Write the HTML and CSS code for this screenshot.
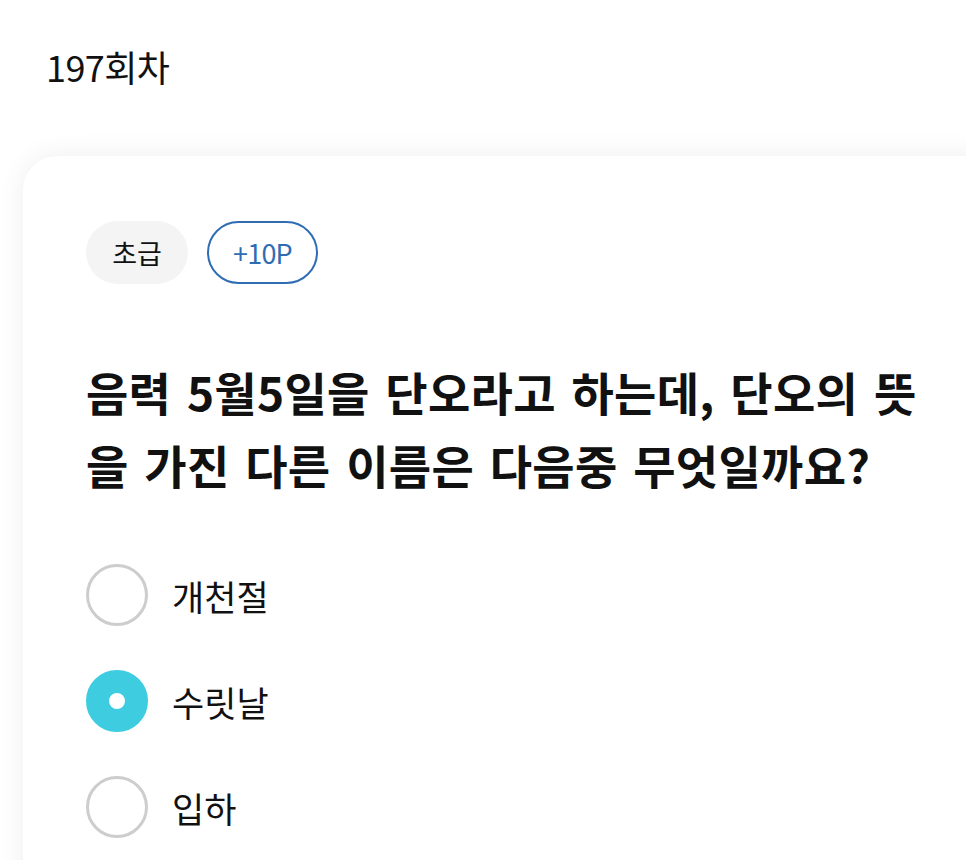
FILE: index.html
```html
<!DOCTYPE html>
<html lang="ko">
<head>
<meta charset="utf-8">
<link rel="stylesheet" href="styles.css">
</head>
<body>
<div class="page">
  <h1 class="round">197회차</h1>
  <section class="card">
    <div class="chips">
      <span class="chip chip-level">초급</span>
      <span class="chip chip-point">+10P</span>
    </div>
    <h2 class="question">음력 5월5일을 단오라고 하는데, 단오의 뜻을 가진 다른 이름은 다음중 무엇일까요?</h2>
    <ul class="options">
      <li class="option"><span class="radio"></span><span class="label">개천절</span></li>
      <li class="option"><span class="radio radio-on"></span><span class="label">수릿날</span></li>
      <li class="option"><span class="radio"></span><span class="label">입하</span></li>
    </ul>
  </section>
</div>
</body>
</html>
```

FILE: styles.css
```css
html, body {
  margin: 0;
  padding: 0;
  background: #ffffff;
  font-family: "Noto Sans CJK KR", "Noto Sans", sans-serif;
  color: #111111;
}
.page {
  width: 966px;
  height: 860px;
  overflow: hidden;
}
.round {
  margin: 0;
  padding: 40px 0 0 46px;
  font-size: 36px;
  font-weight: 400;
  line-height: 52px;
  letter-spacing: -0.6px;
}
.card {
  margin: 64px 0 0 23px;
  width: 1000px;
  height: 800px;
  background: #ffffff;
  border-radius: 34px;
  box-shadow: 0 0 28px rgba(0, 0, 0, 0.07);
  padding: 65px 0 0 63px;
  box-sizing: border-box;
}
.chips {
  display: flex;
  gap: 19px;
}
.chip {
  display: inline-flex;
  align-items: center;
  justify-content: center;
  height: 63px;
  box-sizing: border-box;
  border-radius: 32px;
  font-size: 27px;
  line-height: 1;
}
.chip-level {
  width: 102px;
  background: #f4f4f4;
  color: #111111;
}
.chip-point {
  width: 111px;
  border: 2px solid #2f6db3;
  color: #2f6db3;
  letter-spacing: -0.8px;
}
.question {
  margin: 71px 0 0 0;
  width: 845px;
  font-size: 46px;
  font-weight: 700;
  line-height: 73px;
  letter-spacing: 0.3px;
  word-spacing: 2.5px;
}
.options {
  list-style: none;
  margin: 63px 0 0 0;
  padding: 0;
  display: flex;
  flex-direction: column;
  gap: 44px;
}
.option {
  display: flex;
  align-items: center;
  gap: 24px;
  height: 62px;
}
.radio {
  width: 62px;
  height: 62px;
  box-sizing: border-box;
  border-radius: 50%;
  border: 3px solid #cdcdcd;
  background: #ffffff;
  flex: none;
}
.radio-on {
  border: 23px solid #3ecde0;
  background: #ffffff;
}
.label {
  font-size: 35px;
  line-height: 1;
}
```
